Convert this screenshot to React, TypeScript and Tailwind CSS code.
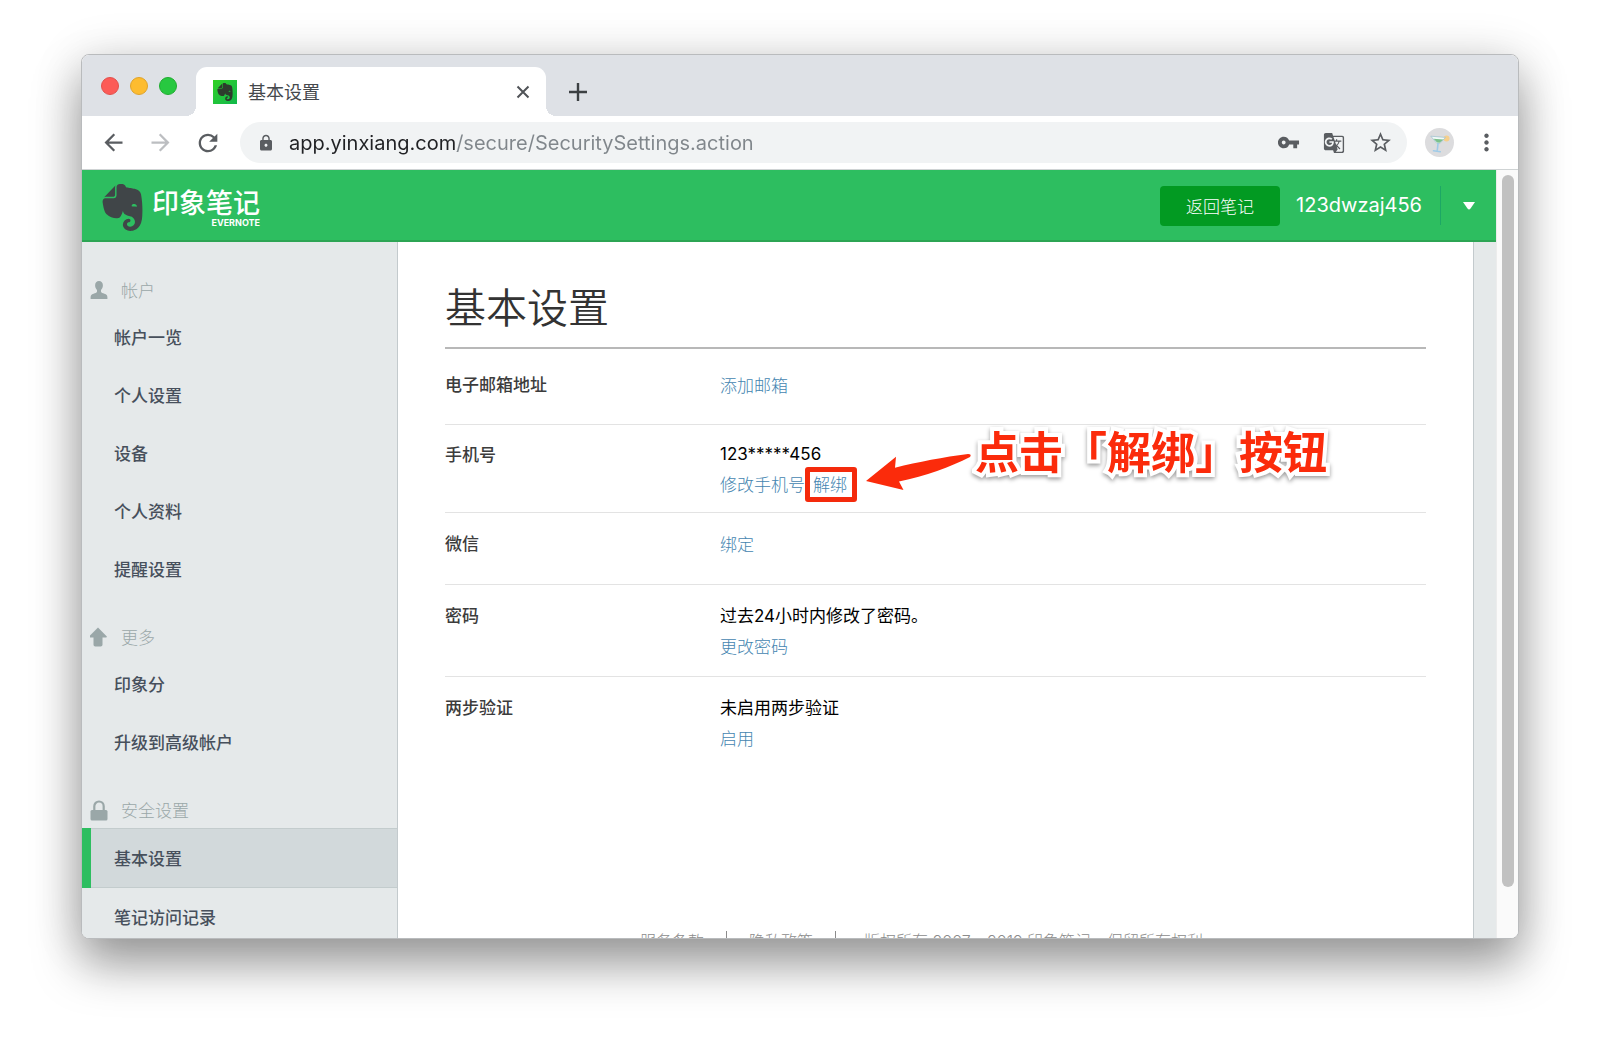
import React from 'react';
import {
    MdArrowBack,
    MdArrowForward,
    MdGTranslate,
    MdLock,
    MdMoreVert,
    MdRefresh,
    MdStarBorder,
    MdVpnKey,
} from 'react-icons/md';
import { SiEvernote } from 'react-icons/si';

interface NavGroup {
    title: string;
    icon: React.ReactNode;
    items: string[];
}

interface SettingRow {
    label: string;
    value?: string;
    links: string[];
    height: string;
}

const UserIcon = () => (
    <svg viewBox="0 0 18 18" className="w-[18px] h-[18px]" fill="currentColor">
        <path d="M9 0c2.400 0 3.900 1.800 3.900 4.300 0 1.900-.8 3.700-1.900 4.700v1.800c.5 1 1.700 1.400 3.400 1.900 2.100.6 3 1.500 3 3.600V18H.6v-1.700c0-2.100.9-3 3-3.600 1.700-.5 2.900-.9 3.400-1.900V9C5.900 8 5.100 6.200 5.100 4.300 5.100 1.800 6.600 0 9 0z" />
    </svg>
);

const UpIcon = () => (
    <svg viewBox="0 0 18 20" className="w-[18px] h-[20px]" fill="currentColor">
        <path d="M8 .4 16.600 9.200c.5.6.2 1.300-.5 1.300H12.500v7c0 1.200-.7 1.900-1.900 1.900H5.400c-1.200 0-1.900-.7-1.900-1.900v-7H-.1c-.7 0-1-.7-.5-1.300z" />
    </svg>
);

const PadlockIcon = () => (
    <svg viewBox="0 0 18 21" className="w-[18px] h-[21px]" fill="none">
        <path d="M4.300 10V6.200a4.700 4.700 0 0 1 9.400 0V10" stroke="currentColor" strokeWidth="2.200" />
        <rect x="0.500" y="10" width="17" height="10.500" rx="1.500" fill="currentColor" />
    </svg>
);

const CloseIcon = () => (
    <svg viewBox="0 0 14 14" className="w-[14px] h-[14px]" stroke="currentColor" strokeWidth="2">
        <path d="M1.500 1.500l11 11M12.500 1.500l-11 11" />
    </svg>
);

const PlusIcon = () => (
    <svg viewBox="0 0 18 18" className="w-[18px] h-[18px]" stroke="currentColor" strokeWidth="2.400">
        <path d="M9 0v18M0 9h18" />
    </svg>
);

const NAV_GROUPS: NavGroup[] = [
    { title: '帐户', icon: <UserIcon />, items: ['帐户一览', '个人设置', '设备', '个人资料', '提醒设置'] },
    { title: '更多', icon: <UpIcon />, items: ['印象分', '升级到高级帐户'] },
    { title: '安全设置', icon: <PadlockIcon />, items: ['基本设置', '笔记访问记录'] },
];

const SETTINGS: SettingRow[] = [
    { label: '电子邮箱地址', links: ['添加邮箱'], height: 'h-[76px] pt-[21px] leading-[30px]' },
    { label: '手机号', value: '123*****456', links: ['修改手机号', '解绑'], height: 'h-[88px] pt-[15px] leading-[29px]' },
    { label: '微信', links: ['绑定'], height: 'h-[72px] pt-[16px] leading-[30px]' },
    { label: '密码', value: '过去24小时内修改了密码。', links: ['更改密码'], height: 'h-[92px] pt-[16px] leading-[30px]' },
    { label: '两步验证', value: '未启用两步验证', links: ['启用'], height: 'h-[92px] pt-[16px] leading-[30px]' },
];

const TabStrip = () => (
    <div className="h-[61px] shrink-0 bg-[#dee1e6] flex items-end rounded-t-[7px]">
        <div className="w-[114px] h-full pl-[19px] pt-[22px] flex gap-[11px]">
            <button aria-label="关闭" className="w-[18px] h-[18px] rounded-full bg-[#fc5b57] border border-[#e2504c]" />
            <button aria-label="最小化" className="w-[18px] h-[18px] rounded-full bg-[#fdbc2f] border border-[#dfa32a]" />
            <button aria-label="缩放" className="w-[18px] h-[18px] rounded-full bg-[#27c840] border border-[#1fac30]" />
        </div>
        <div className="relative w-[350px] h-[49px] bg-white rounded-t-[11px] flex items-center pl-[17px] pr-4">
            <span className="absolute -left-[10px] bottom-0 w-[10px] h-[10px] bg-[radial-gradient(circle_at_0_0,transparent_10px,#fff_10px)]" />
            <span className="absolute -right-[10px] bottom-0 w-[10px] h-[10px] bg-[radial-gradient(circle_at_100%_0,transparent_10px,#fff_10px)]" />
            <span className="w-6 h-6 flex items-center justify-center bg-linear-to-br from-[#2fd01f] to-[#0fb84a] text-[#2d3b2d]">
                <SiEvernote className="w-[18px] h-[18px]" />
            </span>
            <span className="flex-1 ml-[11px] pb-[2px] text-[18px] leading-6 text-[#45494d]">基本设置</span>
            <button aria-label="关闭标签页" className="text-[#505357]"><CloseIcon /></button>
        </div>
        <button aria-label="新标签页" className="h-[49px] ml-[23px] text-[#3c4043]"><PlusIcon /></button>
    </div>
);

const CocktailAvatar = () => (
    <span className="w-[29px] h-[29px] rounded-full bg-[#dcdcde] flex items-center justify-center">
        <svg viewBox="0 0 20 20" className="w-5 h-5" fill="none">
            <circle cx="16.500" cy="5.500" r="3" fill="#f6cf8b" />
            <path d="M.8 3.200 15.500 4.400 9.700 10.600 6.800 10.400z" fill="#f2fafa" stroke="#a5c4cf" strokeWidth="0.800" />
            <path d="M3.500 5.700 13.500 6.500 9.600 9.800 7 9.600z" fill="#7cc08c" />
            <path d="M8 10.800 7.300 17M3.500 17.800l6.800.9" stroke="#9fcbe8" strokeWidth="1.600" strokeLinecap="round" />
        </svg>
    </span>
);

const Toolbar = () => (
    <div className="h-[54px] shrink-0 bg-white border-b border-[#cfd3d4] flex items-center pl-[18px] pr-[18px] text-[#5a5d61]">
        <button aria-label="后退"><MdArrowBack className="w-[27px] h-[27px]" /></button>
        <button aria-label="前进" className="ml-5 text-[#bcbec1]"><MdArrowForward className="w-[27px] h-[27px]" /></button>
        <button aria-label="重新加载" className="ml-5"><MdRefresh className="w-7 h-7" /></button>
        <div className="flex-1 h-[41px] ml-[18px] rounded-full bg-[#f1f3f4] flex items-center pl-[17px] pr-[14px]">
            <MdLock className="w-[18px] h-[18px]" />
            <input
                type="text"
                aria-label="地址"
                readOnly
                value="app.yinxiang.com/secure/SecuritySettings.action"
                className="flex-1 min-w-0 ml-[14px] text-[20px] outline-none text-transparent bg-clip-text bg-[linear-gradient(to_right,#202124_168px,#80868b_168px)] font-['Inter','Noto_Sans_CJK_SC',sans-serif]"
            />
            <div className="flex items-center gap-[23px]">
                <button aria-label="密码"><MdVpnKey className="w-[23px] h-[23px]" /></button>
                <button aria-label="翻译"><MdGTranslate className="w-[22px] h-[22px]" /></button>
                <button aria-label="收藏"><MdStarBorder className="w-[25px] h-[25px]" /></button>
            </div>
        </div>
        <button aria-label="个人资料" className="ml-[18px]"><CocktailAvatar /></button>
        <button aria-label="更多" className="ml-[19px]"><MdMoreVert className="w-[27px] h-[27px]" /></button>
    </div>
);

const Header = () => (
    <header className="h-[72px] shrink-0 bg-[#2dbe60] border-b-2 border-[#2ca554] flex items-center justify-between text-white">
        <a href="#" className="flex items-center pl-[17px] pt-1">
            <SiEvernote className="w-[47px] h-[47px] text-[#404548]" />
            <span className="ml-[6px] flex flex-col items-end">
                <span className="text-[27px] leading-8 font-medium">印象笔记</span>
                <span className="text-[9px] leading-[10px] font-bold font-['Inter',sans-serif]">EVERNOTE</span>
            </span>
        </a>
        <div className="flex items-center pt-px pr-[21px]">
            <button className="w-[120px] h-10 rounded bg-[#029a22] text-[17px] font-light">返回笔记</button>
            <span className="w-[130px] ml-3 pb-[2px] text-[20px] text-right font-['Inter',sans-serif]">123dwzaj456</span>
            <span className="w-px h-[39px] ml-[18px] bg-[#1da765]" />
            <button aria-label="帐户菜单" className="ml-[22px]">
                <svg viewBox="0 0 12 8" className="w-3 h-2" fill="currentColor"><path d="M0 0h12L7.500 6.500Q6 8.500 4.500 6.500z" /></svg>
            </button>
        </div>
    </header>
);

const Sidebar = () => (
    <nav className="w-[316px] shrink-0 pt-[9px] border-r border-[#c3cacd] bg-[#e5e9ea]">
        {NAV_GROUPS.map(group => (
            <section key={group.title} className="pt-[21px]">
                <h2 className="h-9 pl-2 flex items-center text-[#9aa7a8] text-[17px] font-light">
                    {group.icon}
                    <span className="ml-[13px]">{group.title}</span>
                </h2>
                <ul>
                    {group.items.map(item => (
                        <li key={item}>
                            <a
                                href="#"
                                className={`flex items-center text-[17px] font-medium text-[#47505c] ${
                                    item === '基本设置'
                                        ? 'h-[60px] pl-[23px] border-l-[9px] border-l-[#2dbe60] bg-[#d2d9db] shadow-[inset_0_1px_0_#c3cccd,inset_0_-1px_0_#c3cccd]'
                                        : 'h-[58px] pl-8'
                                }`}
                            >
                                {item}
                            </a>
                        </li>
                    ))}
                </ul>
            </section>
        ))}
    </nav>
);

const Annotation = () => (
    <span className="absolute left-[53px] -top-[49px] flex items-start pointer-events-none">
        <svg viewBox="0 0 106 40" className="w-[106px] h-[40px] mt-8">
            <path d="M0 29 30 4.700 29 15.700C52 10 78 5 102 2q4 0 2 3C84 15 60 24 33 29.500l4.500 8.500z" fill="#fb2b0b" />
        </svg>
        <span className="ml-[3px] whitespace-nowrap text-[44px] leading-[60px] font-bold text-[#fb2b0b] [-webkit-text-stroke:8px_white] [paint-order:stroke_fill] drop-shadow-[0_2px_2px_rgba(0,0,0,0.4)]">
            点击「解绑」按钮
        </span>
    </span>
);

const SettingsTable = () => (
    <dl>
        {SETTINGS.map(row => (
            <div key={row.label} className={`${row.height} flex border-b border-[#e3e3e3] last:border-b-0 text-[17px]`}>
                <dt className="w-[275px] shrink-0 -mt-px font-medium text-[#3c3c3c]">{row.label}</dt>
                <dd>
                    {row.value && <p className="text-black font-['Inter','Noto_Sans_CJK_SC',sans-serif]">{row.value}</p>}
                    <p className="flex gap-2">
                        {row.links.map(link => (
                            <span key={link} className="relative">
                                <a href="#" className="font-light text-[#4485b0]">{link}</a>
                                {link === '解绑' && (
                                    <>
                                        <span className="absolute -left-2 -top-[2px] w-[52px] h-[35px] border-[5px] border-[#f42a0c] rounded-[3px] pointer-events-none" />
                                        <Annotation />
                                    </>
                                )}
                            </span>
                        ))}
                    </p>
                </dd>
            </div>
        ))}
    </dl>
);

const App: React.FC = () => {
    return (
        <div className="h-screen overflow-hidden bg-white px-[81px] pt-[54px] pb-[107px] font-['Noto_Sans_CJK_SC',sans-serif]">
            <div className="h-full flex flex-col overflow-hidden rounded-lg border border-[#b9bbbd] bg-white shadow-[0_26px_48px_rgba(0,0,0,0.36),0_4px_50px_rgba(0,0,0,0.14)]">
                <TabStrip />
                <Toolbar />
                <div className="flex-1 min-h-0 flex">
                    <div className="flex-1 min-w-0 flex flex-col">
                        <Header />
                        <div className="flex-1 min-h-0 flex overflow-hidden bg-[#e5e9ea]">
                            <Sidebar />
                            <main className="flex-1 min-w-0 mr-[22px] px-[47px] pt-[33px] bg-white border-r border-[#c3cacd]">
                                <h1 className="pb-3 text-[41px] leading-[60px] font-[350] text-[#333] border-b-2 border-[#b8b8b8]">基本设置</h1>
                                <SettingsTable />
                                <footer className="mt-[162px] pr-3 flex justify-center items-center text-[16px] leading-5 font-light text-[#8c8c8c] font-['Inter','Noto_Sans_CJK_SC',sans-serif]">
                                    <a href="#" className="pr-[22px]">服务条款</a>
                                    <a href="#" className="px-[22px] border-x border-[#8c8c8c]">隐私政策</a>
                                    <span className="pl-[28px]">版权所有 2007 - 2019 印象笔记。保留所有权利。</span>
                                </footer>
                            </main>
                        </div>
                    </div>
                    <div className="w-[22px] shrink-0 bg-[#fafafa] border-l border-[#ececec] pt-[5px] flex justify-center">
                        <div className="w-3 h-[712px] rounded-full bg-[#c1c1c1]" />
                    </div>
                </div>
            </div>
        </div>
    );
};

export default App;
